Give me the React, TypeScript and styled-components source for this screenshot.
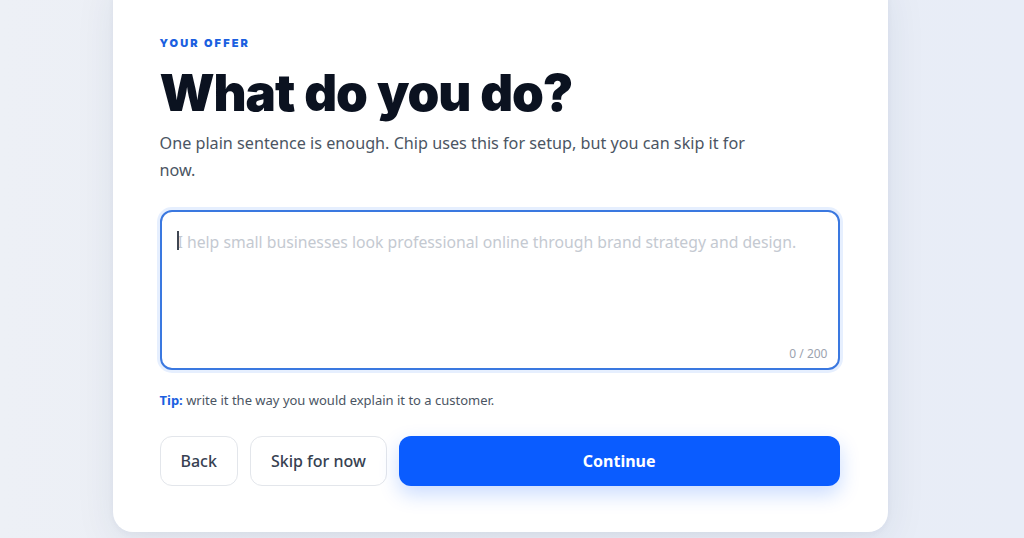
import React from "react";
import styled, { createGlobalStyle } from "styled-components";

const GlobalStyle = createGlobalStyle`
  * { box-sizing: border-box; }
  html, body { margin: 0; padding: 0; }
  body {
    background: linear-gradient(90deg, #edf0f6 0%, #e9edf5 50%, #e8edf7 100%);
    font-family: "Segoe UI", "Noto Sans", "Open Sans", sans-serif;
    overflow: hidden;
  }
`;

const Page = styled.div`
  height: 538px;
  display: flex;
  justify-content: center;
  align-items: flex-start;
  padding-right: 24px;
`;

const Card = styled.main`
  width: 775px;
  margin-top: -24px;
  background: #ffffff;
  border-radius: 20px;
  box-shadow: 0 10px 40px rgba(30, 50, 90, 0.08), 0 2px 6px rgba(30, 50, 90, 0.04);
  padding: 60px 48px 46px 47px;
  display: flex;
  flex-direction: column;
`;

const Eyebrow = styled.div`
  font-family: "Inter", "Lato", sans-serif;
  font-weight: 900;
  font-size: 11px;
  line-height: 14px;
  letter-spacing: 2.1px;
  color: #1b5fe0;
  text-transform: uppercase;
`;

const Title = styled.h1`
  margin: 13px 0 0;
  font-family: "Inter", "Lato", sans-serif;
  font-weight: 900;
  font-size: 51px;
  line-height: 59px;
  letter-spacing: -1.1px;
  word-spacing: 1px;
  color: #0b1220;
`;

const Lead = styled.p`
  margin: 8px 0 0;
  max-width: 600px;
  font-size: 16.2px;
  line-height: 27px;
  color: #4b5563;
`;

const Field = styled.div`
  position: relative;
  margin-top: 26px;
`;

const Input = styled.textarea`
  display: block;
  width: 100%;
  height: 160px;
  resize: none;
  border: 2px solid #3a78e0;
  border-radius: 12px;
  box-shadow: 0 0 0 3px rgba(59, 130, 246, 0.13);
  padding: 18px 16px;
  font-family: inherit;
  font-size: 15.75px;
  line-height: 24px;
  color: #1f2937;
  caret-color: #374151;
  outline: none;
  background: #fff;
  &::placeholder { color: #c4c9d1; }
`;

const Caret = styled.span`
  position: absolute;
  left: 17px;
  top: 21px;
  width: 2px;
  height: 19px;
  background: #3f4652;
  pointer-events: none;
`;

const Counter = styled.span`
  position: absolute;
  right: 12px;
  bottom: 8px;
  font-size: 12px;
  color: #9ca3af;
`;

const Tip = styled.p`
  margin: 21px 0 0;
  font-size: 13px;
  line-height: 18px;
  color: #4b5563;
  b { color: #1b5fe0; font-weight: 700; }
`;

const Actions = styled.div`
  margin-top: 27px;
  display: flex;
  gap: 12px;
`;

const Button = styled.button<{ $primary?: boolean }>`
  height: 50px;
  padding: 0 20px;
  border-radius: 12px;
  font-family: inherit;
  font-size: 16px;
  cursor: pointer;
  ${(p) =>
    p.$primary
      ? `
    flex: 1;
    background: #0a5cff;
    color: #fff;
    border: none;
    font-weight: 700;
    box-shadow: 0 8px 20px rgba(10, 92, 255, 0.22);
  `
      : `
    background: #fff;
    color: #374151;
    border: 1px solid #e3e6eb;
    font-weight: 500;
  `}
`;

export default function App() {
  return (
    <>
      <GlobalStyle />
      <Page>
        <Card>
          <Eyebrow>Your offer</Eyebrow>
          <Title>What do you do?</Title>
          <Lead>
            One plain sentence is enough. Chip uses this for setup, but you can skip it for now.
          </Lead>
          <Field>
            <Input
              maxLength={200}
              placeholder="I help small businesses look professional online through brand strategy and design."
            />
            <Caret aria-hidden="true" />
            <Counter>0 / 200</Counter>
          </Field>
          <Tip>
            <b>Tip:</b> write it the way you would explain it to a customer.
          </Tip>
          <Actions>
            <Button>Back</Button>
            <Button>Skip for now</Button>
            <Button $primary>Continue</Button>
          </Actions>
        </Card>
      </Page>
    </>
  );
}
